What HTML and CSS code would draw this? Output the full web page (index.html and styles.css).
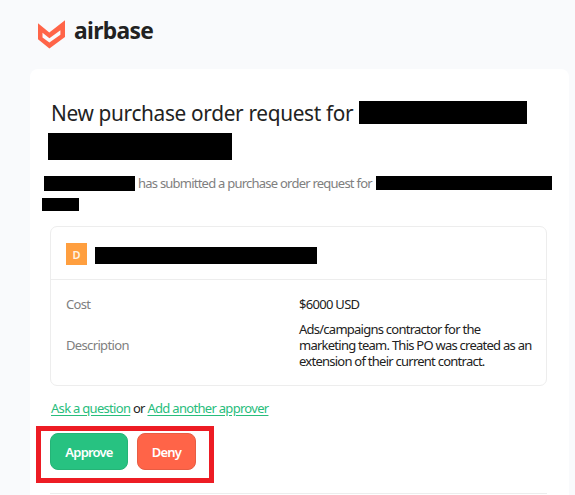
FILE: index.html
```html
<!DOCTYPE html>
<html lang="en">
<head>
<meta charset="utf-8">
<title>New purchase order request</title>
<link rel="stylesheet" href="styles.css">
</head>
<body>
<header class="brand">
  <svg class="brand-mark" viewBox="0 0 27 29" width="27" height="29" aria-hidden="true">
    <path fill="#ff6448" fill-rule="evenodd" d="M0 3.3 11.3 12.4 27 .2V17L11.4 28.6 0 19.3ZM4.5 12.8v4.7l6.9 5 11-7.8V10.2l-11 8Z"/>
  </svg>
  <span class="brand-name">airbase</span>
</header>
<main class="card">
  <h1 class="title">
    <span class="title-line"><span class="title-text">New purchase order request for</span><i class="redact title-a"></i></span>
    <i class="redact title-b"></i>
  </h1>
  <div class="summary">
    <p class="summary-line"><i class="redact who"></i><span class="summary-text">has submitted a purchase order request for</span><i class="redact vendor"></i></p>
    <i class="redact rest"></i>
  </div>
  <section class="details">
    <div class="details-head"><span class="avatar">D</span><i class="redact name"></i></div>
    <dl class="fields">
      <dt>Cost</dt><dd class="cost">$6000 USD</dd>
      <dt>Description</dt><dd>Ads/campaigns contractor for the marketing team. This PO was created as an extension of their current contract.</dd>
    </dl>
  </section>
  <p class="links"><a href="#">Ask a question</a> or <a href="#">Add another approver</a></p>
  <div class="actions">
    <button class="btn approve">Approve</button>
    <button class="btn deny">Deny</button>
    <span class="highlight"></span>
  </div>
  <hr class="rule">
</main>
</body>
</html>
```
FILE: styles.css
```css
* { box-sizing: border-box; }
body {
  margin: 0;
  height: 495px;
  overflow: hidden;
  background: #f9fafc;
  color: #222;
  font: 13px/16px "Noto Sans", sans-serif;
  letter-spacing: -0.4px;
}
.brand { display: flex; height: 69px; padding: 20px 0 0 38px; }
.brand-name {
  margin: -6px 0 0 9px;
  font: 700 24px/32px "Noto Sans", sans-serif;
  letter-spacing: -0.7px;
  transform: scaleX(0.95);
  transform-origin: left;
}
.card {
  width: 539px;
  height: 440px;
  margin-left: 30px;
  padding: 32px 22px 0 20px;
  border-radius: 8px 8px 0 0;
  background: #fff;
}
.redact { display: block; flex: none; background: #000; }
.title { margin: 0; font-size: 22px; font-weight: 400; line-height: 24px; letter-spacing: -0.35px; }
.title-line { display: flex; height: 32px; white-space: nowrap; }
.title-text { width: 308px; margin: -1px 0 0 1px; transform: scaleX(0.946); transform-origin: left; }
.title-a { width: 168px; height: 23px; }
.title-b { width: 184px; height: 27px; margin-left: -2px; }
.summary { height: 50px; margin: 16px 0 0 -8px; color: #808080; }
.summary-line { display: flex; height: 22px; margin: 0; white-space: nowrap; }
.summary-text { flex: none; width: 238px; margin: -1px 0 0 3px; letter-spacing: -0.78px; word-spacing: 0.1px; }
.who { width: 91px; height: 15px; margin-left: 2px; }
.vendor { width: 176px; height: 14px; }
.rest { width: 37px; height: 13px; }
.details { width: 497px; height: 160px; border: 1px solid #ededed; border-radius: 7px; }
.details-head { display: flex; height: 53px; padding: 16px 15px; border-bottom: 1px solid #ededed; }
.avatar {
  width: 21px;
  height: 22px;
  background: #ff9f3f;
  color: #fff3e2;
  font-size: 11px;
  font-weight: 600;
  line-height: 23px;
  text-align: center;
  letter-spacing: 0;
}
.name { width: 222px; height: 17px; margin: 4px 0 0 8px; }
.fields {
  display: grid;
  grid-template-columns: 233px 240px;
  grid-template-rows: 16px 48px;
  row-gap: 9px;
  align-items: center;
  margin: 0;
  padding: 16px 0 0 15px;
  letter-spacing: -0.75px;
}
.fields dt { color: #808080; letter-spacing: -0.65px; }
.fields dd { margin: 0; }
.fields .cost { letter-spacing: -0.7px; }
.links { margin: 14px 0 0 1px; letter-spacing: -0.7px; }
.links a { color: #28bd7c; text-underline-offset: 2px; }
.actions { position: relative; display: flex; gap: 9px; margin-top: 17px; }
.btn {
  height: 37px;
  padding: 0;
  border: 1px solid #25b477;
  border-radius: 8px;
  background: #27c281;
  color: #fff;
  font: 600 13px/16px "Noto Sans", sans-serif;
  letter-spacing: -0.8px;
}
.approve { width: 78px; }
.deny { width: 59px; border-color: #e75d44; background: #ff6448; }
.highlight { position: absolute; left: -14px; top: -7px; width: 178px; height: 57px; border: 5px solid #ed1c24; }
.rule { height: 1px; margin: 23px 0 0; border: 0; background: #ededed; }
```
